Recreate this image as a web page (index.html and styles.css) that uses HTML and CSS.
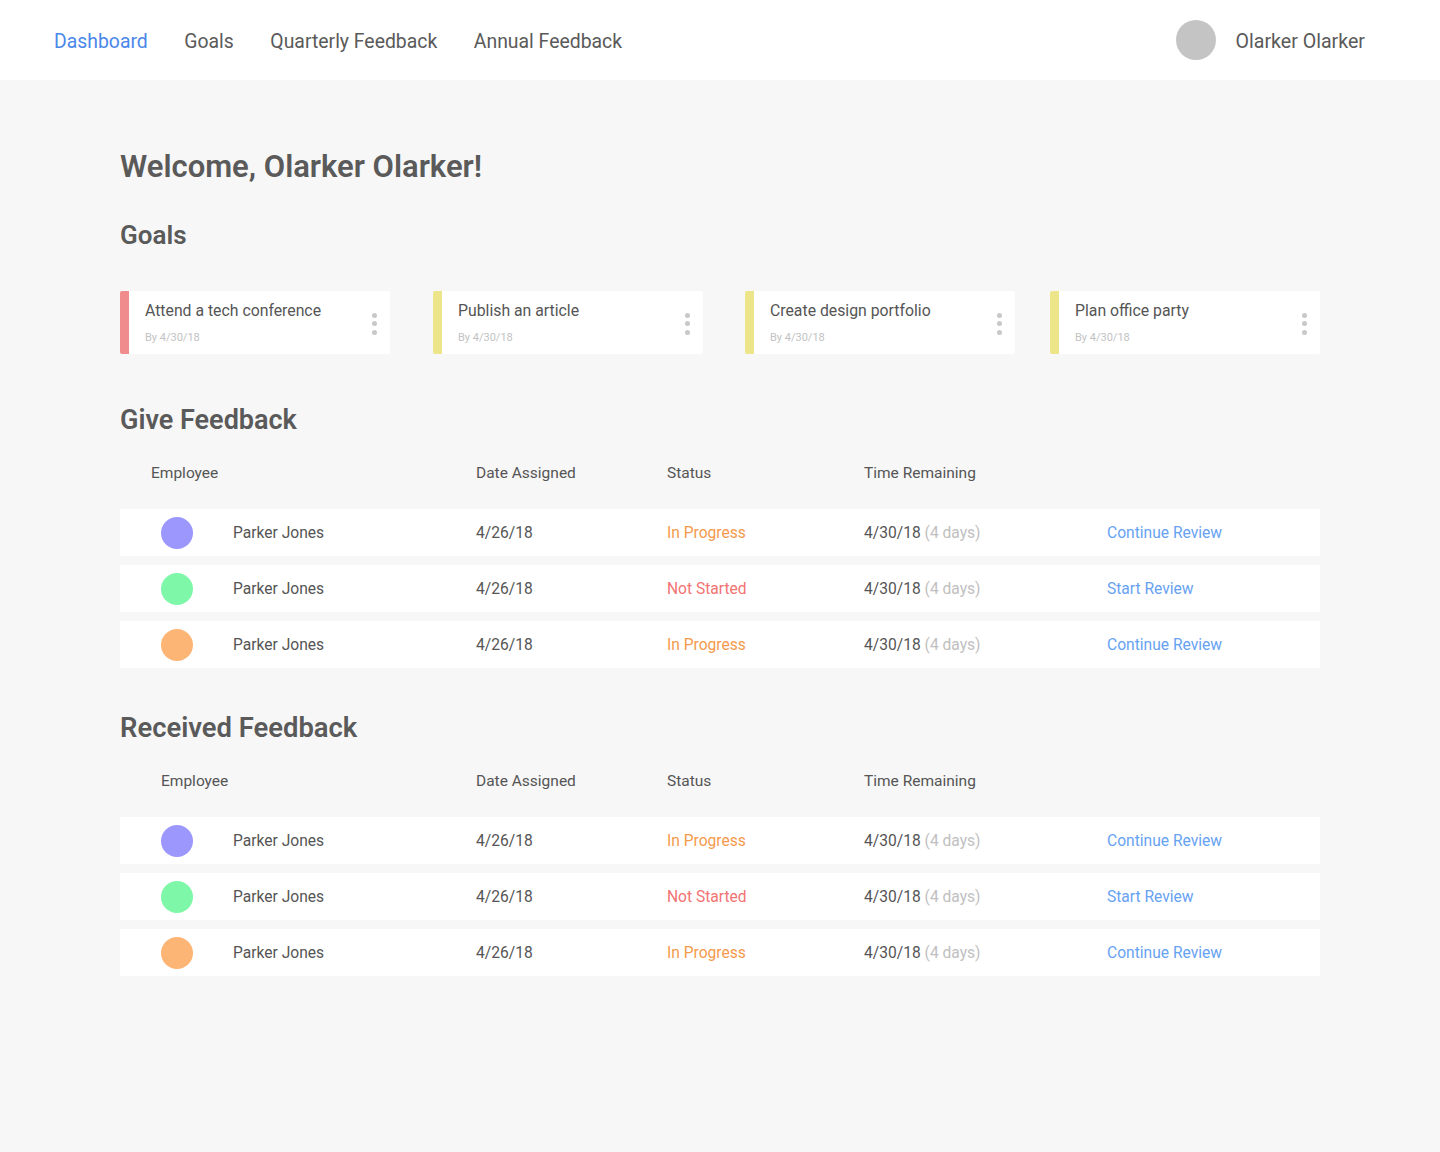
FILE: index.html
```html
<!DOCTYPE html>
<html lang="en">
<head>
<meta charset="utf-8">
<title>Dashboard</title>
<link rel="stylesheet" href="styles.css">
</head>
<body>
<header class="topbar">
  <nav class="nav">
    <a class="nav-link active" href="#">Dashboard</a>
    <a class="nav-link" href="#">Goals</a>
    <a class="nav-link" href="#">Quarterly Feedback</a>
    <a class="nav-link" href="#">Annual Feedback</a>
  </nav>
  <div class="user">
    <span class="user-avatar"></span>
    <span class="user-name">Olarker Olarker</span>
  </div>
</header>

<main class="main">
  <h1 class="welcome">Welcome, Olarker Olarker!</h1>

  <h2 class="section-title goals-title">Goals</h2>
  <div class="goals">
    <div class="goal goal-red">
      <div class="goal-body">
        <div class="goal-title">Attend a tech conference</div>
        <div class="goal-date">By 4/30/18</div>
      </div>
      <div class="kebab"><span></span><span></span><span></span></div>
    </div>
    <div class="goal goal-yellow">
      <div class="goal-body">
        <div class="goal-title">Publish an article</div>
        <div class="goal-date">By 4/30/18</div>
      </div>
      <div class="kebab"><span></span><span></span><span></span></div>
    </div>
    <div class="goal goal-yellow">
      <div class="goal-body">
        <div class="goal-title">Create design portfolio</div>
        <div class="goal-date">By 4/30/18</div>
      </div>
      <div class="kebab"><span></span><span></span><span></span></div>
    </div>
    <div class="goal goal-yellow">
      <div class="goal-body">
        <div class="goal-title">Plan office party</div>
        <div class="goal-date">By 4/30/18</div>
      </div>
      <div class="kebab"><span></span><span></span><span></span></div>
    </div>
  </div>

  <h2 class="section-title feedback-title">Give Feedback</h2>
  <div class="table">
    <div class="thead">
      <div class="th th-employee">Employee</div>
      <div class="th">Date Assigned</div>
      <div class="th">Status</div>
      <div class="th">Time Remaining</div>
      <div class="th"></div>
    </div>
    <div class="row">
      <div class="cell cell-avatar"><span class="avatar purple"></span></div>
      <div class="cell">Parker Jones</div>
      <div class="cell">4/26/18</div>
      <div class="cell status-progress">In Progress</div>
      <div class="cell">4/30/18 <span class="muted">(4 days)</span></div>
      <div class="cell"><a class="action" href="#">Continue Review</a></div>
    </div>
    <div class="row">
      <div class="cell cell-avatar"><span class="avatar green"></span></div>
      <div class="cell">Parker Jones</div>
      <div class="cell">4/26/18</div>
      <div class="cell status-notstarted">Not Started</div>
      <div class="cell">4/30/18 <span class="muted">(4 days)</span></div>
      <div class="cell"><a class="action" href="#">Start Review</a></div>
    </div>
    <div class="row">
      <div class="cell cell-avatar"><span class="avatar orange"></span></div>
      <div class="cell">Parker Jones</div>
      <div class="cell">4/26/18</div>
      <div class="cell status-progress">In Progress</div>
      <div class="cell">4/30/18 <span class="muted">(4 days)</span></div>
      <div class="cell"><a class="action" href="#">Continue Review</a></div>
    </div>
  </div>

  <h2 class="section-title received-title">Received Feedback</h2>
  <div class="table">
    <div class="thead">
      <div class="th th-employee th-employee-wide">Employee</div>
      <div class="th">Date Assigned</div>
      <div class="th">Status</div>
      <div class="th">Time Remaining</div>
      <div class="th"></div>
    </div>
    <div class="row">
      <div class="cell cell-avatar"><span class="avatar purple"></span></div>
      <div class="cell">Parker Jones</div>
      <div class="cell">4/26/18</div>
      <div class="cell status-progress">In Progress</div>
      <div class="cell">4/30/18 <span class="muted">(4 days)</span></div>
      <div class="cell"><a class="action" href="#">Continue Review</a></div>
    </div>
    <div class="row">
      <div class="cell cell-avatar"><span class="avatar green"></span></div>
      <div class="cell">Parker Jones</div>
      <div class="cell">4/26/18</div>
      <div class="cell status-notstarted">Not Started</div>
      <div class="cell">4/30/18 <span class="muted">(4 days)</span></div>
      <div class="cell"><a class="action" href="#">Start Review</a></div>
    </div>
    <div class="row">
      <div class="cell cell-avatar"><span class="avatar orange"></span></div>
      <div class="cell">Parker Jones</div>
      <div class="cell">4/26/18</div>
      <div class="cell status-progress">In Progress</div>
      <div class="cell">4/30/18 <span class="muted">(4 days)</span></div>
      <div class="cell"><a class="action" href="#">Continue Review</a></div>
    </div>
  </div>
</main>
</body>
</html>
```

FILE: styles.css
```css
* { box-sizing: border-box; }

html, body {
  margin: 0;
  padding: 0;
}

body {
  background: #f7f7f7;
  font-family: Roboto, "Noto Sans", "Liberation Sans", sans-serif;
  color: #555555;
  min-height: 1152px;
}

a { text-decoration: none; }

/* Top bar */
.topbar {
  height: 80px;
  background: #ffffff;
  display: flex;
  align-items: center;
  justify-content: space-between;
  padding: 0 75px 0 54px;
}

.nav {
  display: flex;
  gap: 36.5px;
  padding-top: 4px;
}

.nav-link {
  font-size: 19.4px;
  color: #5a5a5a;
  line-height: 24px;
}

.nav-link.active { color: #4b87ea; }

.user {
  display: flex;
  align-items: center;
  gap: 20px;
}

.user-avatar {
  width: 40px;
  height: 40px;
  border-radius: 50%;
  background: #c4c4c4;
}

.user-name {
  font-size: 19.6px;
  line-height: 24px;
  color: #5a5a5a;
  padding-top: 3px;
}

/* Main */
.main {
  width: 1200px;
  margin-left: 120px;
  padding-top: 69px;
}

.welcome {
  margin: 0;
  font-size: 31px;
  line-height: 36px;
  font-weight: 600;
  color: #5a5a5a;
}

.section-title {
  margin: 0;
  font-size: 26px;
  line-height: 32px;
  font-weight: 600;
  color: #5a5a5a;
}

.goals-title { margin-top: 34px; }
.feedback-title { margin-top: 50px; font-size: 27px; }
.received-title { margin-top: 44px; font-size: 27.4px; }

/* Goals */
.goals {
  margin-top: 40px;
  display: grid;
  grid-template-columns: 313px 312px 305px 270px;
}

.goal {
  width: 270px;
  height: 63px;
  background: #ffffff;
  border-radius: 2px;
  display: flex;
  justify-content: space-between;
  align-items: center;
  padding: 0 13px 0 16px;
  border-left: 9px solid #f08c8c;
}

.goal-yellow { border-left-color: #ede58a; }

.goal-body {
  align-self: flex-start;
  padding-top: 10px;
}

.goal-title {
  font-size: 15.8px;
  line-height: 20px;
  color: #555555;
}

.goal-date {
  margin-top: 10px;
  font-size: 11px;
  line-height: 14px;
  color: #c2c2c2;
}

.kebab {
  display: flex;
  flex-direction: column;
  gap: 3.5px;
  padding-top: 2px;
}

.kebab span {
  width: 5px;
  height: 5px;
  border-radius: 50%;
  background: #c8c8c8;
}

/* Tables */
.table { margin-top: 26px; }

.thead,
.row {
  display: grid;
  grid-template-columns: 113px 243px 191px 197px 243px 1fr;
  align-items: center;
}

.thead {
  grid-template-columns: 356px 191px 197px 243px 1fr;
  height: 20px;
  margin-bottom: 27px;
  padding-top: 1px;
}

.th {
  font-size: 15.5px;
  line-height: 20px;
  color: #555555;
}

.th-employee { padding-left: 31px; }
.th-employee-wide { padding-left: 41px; }

.row {
  height: 47px;
  background: #ffffff;
  border-radius: 2px;
  margin-bottom: 9px;
}

.cell {
  font-size: 15.6px;
  color: #555555;
  white-space: nowrap;
  padding-top: 1px;
}

.cell-avatar { padding-left: 41px; padding-top: 0; display: flex; }

.avatar {
  width: 32px;
  height: 32px;
  border-radius: 50%;
}

.avatar.purple { background: #9c97fc; }
.avatar.green { background: #7ef7a9; }
.avatar.orange { background: #fdb575; }

.status-progress { color: #f59a4c; }
.status-notstarted { color: #f27373; }

.muted { color: #c0c0c0; }

.action { color: #67a2f2; }
```
